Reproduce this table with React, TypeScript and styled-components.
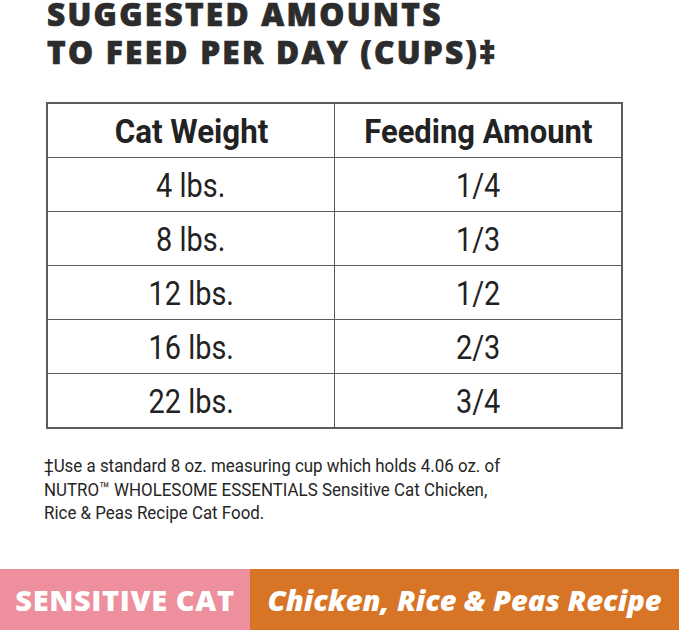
import React from "react";
import styled, { createGlobalStyle } from "styled-components";

const Global = createGlobalStyle`
  html, body { margin: 0; padding: 0; background: #ffffff; }
  #root { width: 679px; height: 630px; overflow: hidden; }
`;

const Page = styled.div`
  width: 679px;
  height: 630px;
  display: flex;
  flex-direction: column;
  background: #fff;
`;

const Title = styled.h1`
  margin: -5px 0 0 0;
  padding: 0 0 0 47px;
  display: flex;
  flex-direction: column;
  font-family: "Open Sans", "Liberation Sans", sans-serif;
  font-weight: 800;
  font-size: 31.5px;
  line-height: 38px;
  letter-spacing: 2.3px;
  -webkit-text-stroke: 0.7px #2c2c2c;
  color: #2c2c2c;
  white-space: nowrap;
`;

const TitleLine = styled.span`
  display: block;
`;

const Table = styled.table`
  margin: 31px 0 0 46px;
  width: 577px;
  border-collapse: collapse;
  border: 2px solid #5c5c5c;
  font-family: "Roboto", "Liberation Sans", sans-serif;
  color: #222;
`;

const Cell = styled.td<{ $head?: boolean }>`
  height: 53px;
  padding: 0;
  border: 1.5px solid #5c5c5c;
  text-align: center;
  vertical-align: middle;
  font-size: 34px;
  font-weight: ${(p) => (p.$head ? 700 : 400)};
  width: 50%;
  white-space: nowrap;
`;

const Narrow = styled.span<{ $scale: number }>`
  display: inline-block;
  transform: scaleX(${(p) => p.$scale});
`;

const Note = styled.p`
  margin: 25px 0 0 44px;
  width: 528px;
  transform: scaleX(0.89);
  transform-origin: left top;
  font-family: "Roboto", "Liberation Sans", sans-serif;
  font-size: 19px;
  line-height: 23.5px;
  color: #262626;
`;

const Bar = styled.div`
  margin-top: auto;
  height: 61px;
  display: grid;
  grid-template-columns: 250px 1fr;
`;

const Tag = styled.div<{ $bg: string; $italic?: boolean }>`
  background: ${(p) => p.$bg};
  color: #fff;
  display: flex;
  align-items: center;
  justify-content: center;
  font-family: "Open Sans", "Liberation Sans", sans-serif;
  font-weight: 800;
  font-style: ${(p) => (p.$italic ? "italic" : "normal")};
  font-size: 29px;
  letter-spacing: ${(p) => (p.$italic ? "0px" : "0.6px")};
`;

const rows: [string, string][] = [
  ["4 lbs.", "1/4"],
  ["8 lbs.", "1/3"],
  ["12 lbs.", "1/2"],
  ["16 lbs.", "2/3"],
  ["22 lbs.", "3/4"],
];

export default function App() {
  return (
    <Page>
      <Global />
      <Title>
        <TitleLine>SUGGESTED AMOUNTS</TitleLine>
        <TitleLine>TO FEED PER DAY (CUPS)‡</TitleLine>
      </Title>
      <Table>
        <tbody>
          <tr>
            <Cell $head>
              <Narrow $scale={0.92}>Cat Weight</Narrow>
            </Cell>
            <Cell $head>
              <Narrow $scale={0.91}>Feeding Amount</Narrow>
            </Cell>
          </tr>
          {rows.map(([w, a]) => (
            <tr key={w}>
              <Cell>
                <Narrow $scale={0.85}>{w}</Narrow>
              </Cell>
              <Cell>
                <Narrow $scale={0.85}>{a}</Narrow>
              </Cell>
            </tr>
          ))}
        </tbody>
      </Table>
      <Note>
        ‡Use a standard 8 oz. measuring cup which holds 4.06 oz. of NUTRO™ WHOLESOME ESSENTIALS Sensitive Cat Chicken,
        Rice &amp; Peas Recipe Cat Food.
      </Note>
      <Bar>
        <Tag $bg="#ee8f9d">SENSITIVE CAT</Tag>
        <Tag $bg="#d87426" $italic>
          Chicken, Rice &amp; Peas Recipe
        </Tag>
      </Bar>
    </Page>
  );
}
